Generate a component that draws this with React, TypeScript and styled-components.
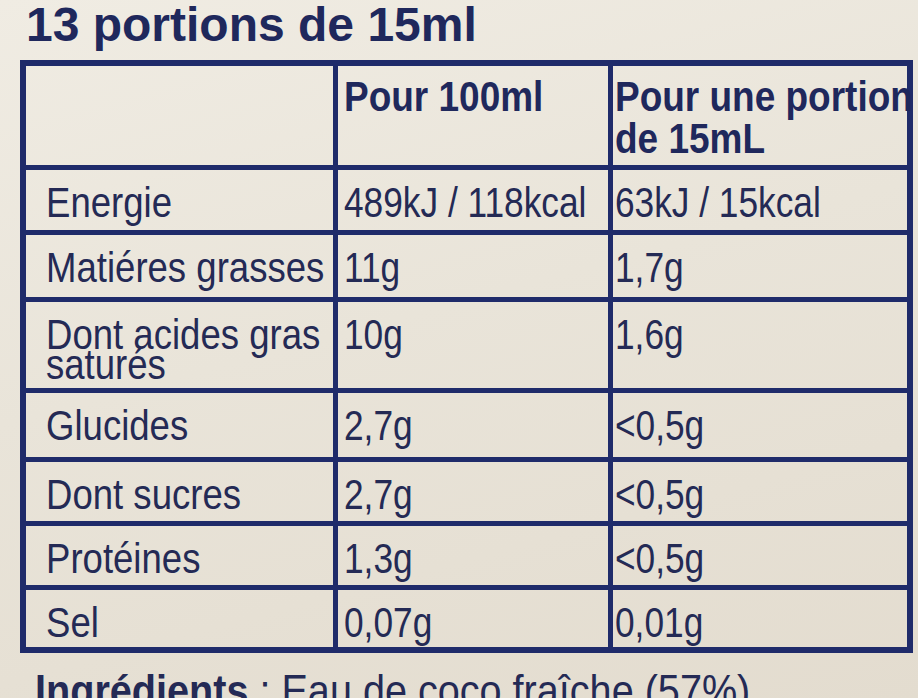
import React from "react";
import styled, { createGlobalStyle } from "styled-components";

const navy = "#1f2b6a";
const ink = "#242a55";

const GlobalStyle = createGlobalStyle`
  html, body {
    margin: 0;
    padding: 0;
    overflow: hidden;
  }
  body {
    background: linear-gradient(165deg, #f0ece3 0%, #e9e4d9 45%, #e3dccf 100%);
    font-family: "Liberation Sans", Arial, sans-serif;
    color: ${ink};
  }
`;

const Label = styled.div`
  width: 918px;
  height: 698px;
  padding-left: 20px;
  box-sizing: border-box;
`;

const Title = styled.h1`
  margin: 0 0 12px 6px;
  padding-top: 2px;
  font-size: 48px;
  line-height: 46px;
  font-weight: 700;
  color: #1f285c;
  white-space: nowrap;
`;

const Table = styled.div<{ $rows: string }>`
  display: grid;
  width: 893px;
  box-sizing: border-box;
  grid-template-columns: 312px 275px minmax(0, 1fr);
  grid-template-rows: ${(p) => p.$rows};
  border: 6px solid ${navy};
`;

const padLeft = [20, 6, 2];

const Cell = styled.div<{ $col: number; $last?: boolean; $head?: boolean }>`
  box-sizing: border-box;
  min-width: 0;
  border-right: ${(p) => (p.$col < 2 ? `5px solid ${navy}` : "none")};
  border-bottom: ${(p) => (p.$last ? "none" : `5px solid ${navy}`)};
  padding-left: ${(p) => padLeft[p.$col]}px;
  padding-top: ${(p) => (p.$head ? 9 : 17)}px;
  font-size: 43px;
  line-height: ${(p) => (p.$head ? 42 : 30)}px;
  font-weight: ${(p) => (p.$head ? 700 : 400)};
  color: ${(p) => (p.$head ? "#1f285c" : ink)};
  overflow: visible;
`;

// the print uses a condensed face, so squeeze the text horizontally
const Squeeze = styled.span<{ $x?: number }>`
  display: inline-block;
  white-space: nowrap;
  transform: scaleX(${(p) => p.$x ?? 0.82});
  transform-origin: 0 0;
`;

const Ingredients = styled.p`
  margin: 16px 0 0 15px;
  font-size: 44px;
  line-height: 44px;
  color: ${ink};
  white-space: nowrap;
  b {
    font-weight: 700;
  }
`;

const rows = [
  { label: ["Energie"], a: "489kJ / 118kcal", b: "63kJ / 15kcal", h: 65 },
  { label: ["Matiéres grasses"], a: "11g", b: "1,7g", h: 67 },
  { label: ["Dont acides gras", "saturés"], a: "10g", b: "1,6g", h: 91 },
  { label: ["Glucides"], a: "2,7g", b: "<0,5g", h: 69 },
  { label: ["Dont sucres"], a: "2,7g", b: "<0,5g", h: 64 },
  { label: ["Protéines"], a: "1,3g", b: "<0,5g", h: 64 },
  { label: ["Sel"], a: "0,07g", b: "0,01g", h: 57.5 },
];

const lines = (parts: string[]) =>
  parts.map((t, i) => (
    <React.Fragment key={i}>
      {i > 0 && <br />}
      {t}
    </React.Fragment>
  ));

export default function App() {
  const template = ["103.5px", ...rows.map((r) => `${r.h}px`)].join(" ");
  return (
    <>
      <GlobalStyle />
      <Label>
        <Title>13 portions de 15ml</Title>
        <Table $rows={template}>
          <Cell $col={0} $head />
          <Cell $col={1} $head>
            <Squeeze $x={0.86}>Pour 100ml</Squeeze>
          </Cell>
          <Cell $col={2} $head>
            <Squeeze $x={0.86}>{lines(["Pour une portion", "de 15mL"])}</Squeeze>
          </Cell>
          {rows.map((r, i) => {
            const last = i === rows.length - 1;
            return (
              <React.Fragment key={r.label[0]}>
                <Cell $col={0} $last={last}>
                  <Squeeze $x={0.85}>{lines(r.label)}</Squeeze>
                </Cell>
                <Cell $col={1} $last={last}>
                  <Squeeze>{r.a}</Squeeze>
                </Cell>
                <Cell $col={2} $last={last}>
                  <Squeeze>{r.b}</Squeeze>
                </Cell>
              </React.Fragment>
            );
          })}
        </Table>
        <Ingredients>
          <Squeeze $x={0.9}>
            <b>Ingrédients</b> : Eau de coco fraîche (57%),
          </Squeeze>
        </Ingredients>
      </Label>
    </>
  );
}
